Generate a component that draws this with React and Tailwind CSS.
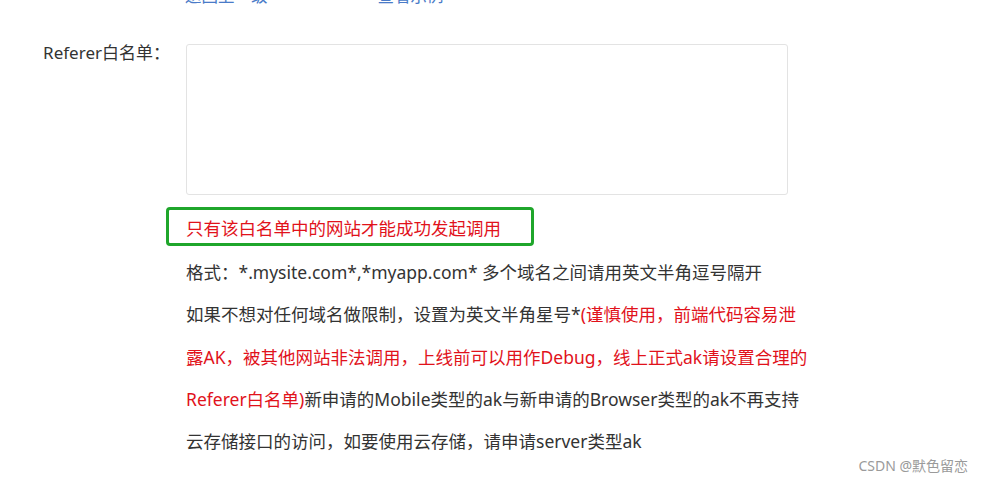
export default function App() {
  const font = { fontFamily: '"Noto Sans", "Noto Sans CJK SC", sans-serif' };
  return (
    <div className="relative w-[984px] h-[484px] overflow-hidden bg-white text-[#333333]" style={font}>
      <div className="h-[5px] overflow-hidden">
        <div className="-mt-[13px] flex text-[16.5px] leading-[18px] text-[#4a7bc8]">
          <span className="ml-[185px]">返回上一级</span>
          <span className="ml-[110px]">查看示例</span>
        </div>
      </div>
      <div className="mt-[39px] flex items-start">
        <div className="w-[186px] pr-[16px] text-right text-[17px] leading-[20px] mt-[-1px]">Referer白名单：</div>
        <div className="w-[602px] h-[151px] rounded-[3px] border border-[#e3e3e3] bg-white"></div>
      </div>
      <div className="ml-[166px] mt-[12px] flex h-[39px] w-[368px] items-center rounded-[4px] border-[3px] border-[#1fa62b] pl-[17px] pt-[4px] text-[17.5px] text-[#e1121b]">
        只有该白名单中的网站才能成功发起调用
      </div>
      <div className="mt-[5px] pl-[186px] text-[17.5px] leading-[42.25px] whitespace-nowrap">
        <div>格式：*.mysite.com*,*myapp.com* 多个域名之间请用英文半角逗号隔开</div>
        <div>
          如果不想对任何域名做限制，设置为英文半角星号*<span className="text-[#e1121b]">(谨慎使用，前端代码容易泄</span>
        </div>
        <div className="text-[#e1121b]">露AK，被其他网站非法调用，上线前可以用作Debug，线上正式ak请设置合理的</div>
        <div>
          <span className="text-[#e1121b]">Referer白名单)</span>新申请的Mobile类型的ak与新申请的Browser类型的ak不再支持
        </div>
        <div>云存储接口的访问，如要使用云存储，请申请server类型ak</div>
      </div>
      <div className="absolute right-[16px] bottom-[8px] text-[14px] text-[#9a9a9a]">CSDN @默色留恋</div>
    </div>
  );
}
